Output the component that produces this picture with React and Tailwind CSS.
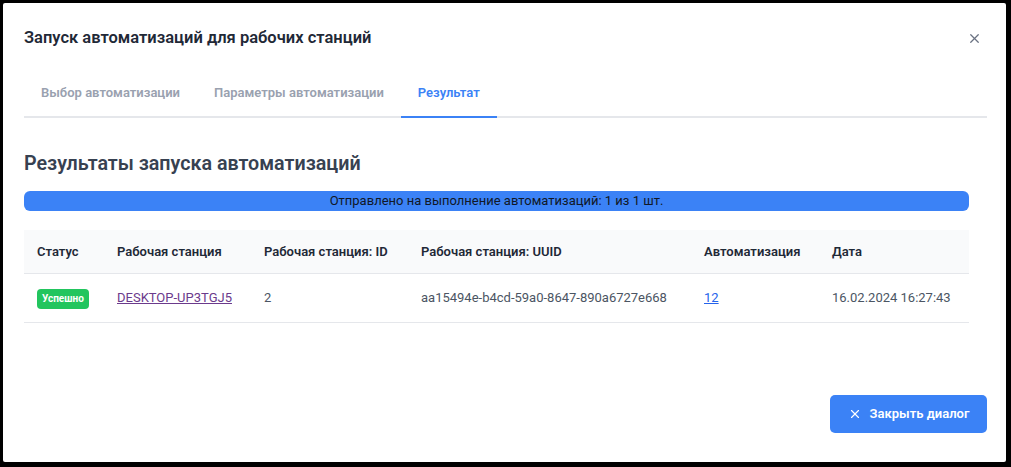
import React from "react";

const tabs = [
  { label: "Выбор автоматизации", active: false },
  { label: "Параметры автоматизации", active: false },
  { label: "Результат", active: true },
];

const columns = [
  { title: "Статус", w: "w-[80px]" },
  { title: "Рабочая станция", w: "w-[147px]" },
  { title: "Рабочая станция: ID", w: "w-[157px]" },
  { title: "Рабочая станция: UUID", w: "w-[283px]" },
  { title: "Автоматизация", w: "w-[128px]" },
  { title: "Дата", w: "flex-1" },
];

const XIcon = ({ className }) => (
  <svg viewBox="0 0 24 24" fill="none" stroke="currentColor" strokeWidth="2" strokeLinecap="round" className={className}>
    <path d="M18 6 6 18" />
    <path d="m6 6 12 12" />
  </svg>
);

export default function App() {
  return (
    <div className="w-[1011px] h-[467px] bg-black pl-[3px] pt-[3px] font-['Roboto',sans-serif]">
      <div className="w-[1003px] h-[459px] bg-white rounded-[2px] flex flex-col pl-[21px] pr-[19px]">
        {/* header */}
        <div className="flex items-center justify-between pt-[22px] h-[48px]">
          <h1 className="text-[16.5px] leading-[26px] font-semibold text-[#1f2937]">
            Запуск автоматизаций для рабочих станций
          </h1>
          <button className="mr-[5px] text-gray-500">
            <XIcon className="w-[15px] h-[15px]" />
          </button>
        </div>

        {/* tabs */}
        <div className="mt-[19px] flex border-b-2 border-gray-200">
          {tabs.map((t) => (
            <div
              key={t.label}
              className={`h-[48px] px-[17px] -mb-[2px] flex items-center text-[13px] font-semibold border-b-2 ${
                t.active ? "text-[#3b82f6] border-[#3b82f6]" : "text-gray-400 border-transparent"
              }`}
            >
              {t.label}
            </div>
          ))}
        </div>

        {/* results */}
        <div className="mr-[18px]">
          <h2 className="mt-[32px] text-[19.7px] leading-[28px] font-semibold text-[#374151]">
            Результаты запуска автоматизаций
          </h2>

          <div className="mt-[13px] h-[20px] rounded-[6px] bg-[#3b82f6] flex items-center justify-center text-[13px] text-[#111827]">
            Отправлено на выполнение автоматизаций: 1 из 1 шт.
          </div>

          <div className="mt-[19px] text-[13px]">
            <div className="flex h-[44px] items-center bg-gray-50 border-b border-gray-200 font-semibold text-[#1f2937]">
              {columns.map((c) => (
                <div key={c.title} className={`${c.w} pl-[13px]`}>
                  {c.title}
                </div>
              ))}
            </div>
            <div className="flex h-[49px] items-center border-b border-gray-200 text-[#4b5563]">
              <div className="w-[80px] pl-[13px]">
                <span className="inline-block rounded-[4px] bg-[#22c55e] px-[5px] py-[3px] text-[10px] leading-[14px] font-bold text-white">
                  Успешно
                </span>
              </div>
              <div className="w-[147px] pl-[13px]">
                <a href="#" className="underline text-[#6b3a8c]">DESKTOP-UP3TGJ5</a>
              </div>
              <div className="w-[157px] pl-[13px]">2</div>
              <div className="w-[283px] pl-[13px]">aa15494e-b4cd-59a0-8647-890a6727e668</div>
              <div className="w-[128px] pl-[13px]">
                <a href="#" className="underline text-[#2563eb]">12</a>
              </div>
              <div className="flex-1 pl-[13px]">16.02.2024 16:27:43</div>
            </div>
          </div>
        </div>

        {/* footer */}
        <div className="mt-auto pb-[29px] flex justify-end">
          <button className="h-[38px] w-[157px] rounded-[5px] bg-[#3b82f6] text-white text-[13px] font-semibold flex items-center justify-center gap-[8px]">
            <XIcon className="w-[14px] h-[14px]" />
            Закрыть диалог
          </button>
        </div>
      </div>
    </div>
  );
}
